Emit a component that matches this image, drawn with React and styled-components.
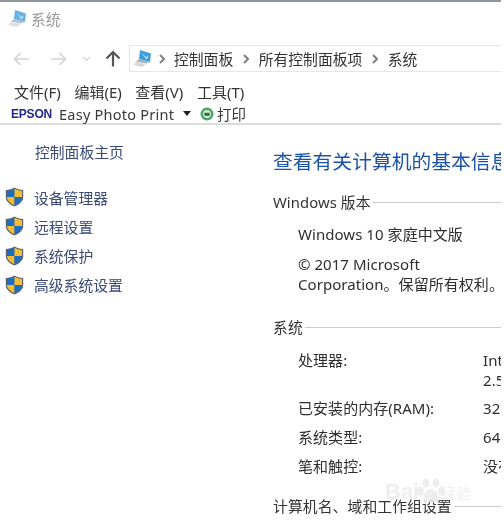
import React from 'react';
import styled, { createGlobalStyle } from 'styled-components';

const GlobalStyle = createGlobalStyle`
    html, body {
        margin: 0;
        padding: 0;
        background: #fff;
    }
    body {
        font-family: "Noto Sans", "Noto Sans CJK SC", "Open Sans", sans-serif;
        color: #2b2b2b;
    }
`;

const Page = styled.div`
    position: relative;
    width: 504px;
    height: 523px;
    overflow: hidden;
    background: #fff;
    filter: blur(0.3px);
`;

const Window = styled.div`
    width: 501px;
    height: 523px;
    overflow: hidden;
    border-top: 2px solid #8f979c;
    box-sizing: border-box;
`;

const TitleBar = styled.div`
    display: flex;
    align-items: center;
    gap: 3px;
    height: 35px;
    padding: 0 0 2px 8px;
    box-sizing: border-box;
    font-size: 14.7px;
    color: #9a9a9a;
`;

const NavBar = styled.div`
    display: flex;
    align-items: center;
    height: 27px;
    margin-top: 8px;
    padding-left: 13px;
`;

const NavButton = styled.span`
    display: flex;
    align-items: center;
    width: ${({ $w }) => $w}px;
    color: ${({ $color }) => $color};
`;

const AddressBar = styled.div`
    display: flex;
    align-items: center;
    flex: 1;
    height: 25px;
    margin-left: 8px;
    padding-left: 3px;
    border: 1px solid #e6e6e6;
    border-right: none;
    font-size: 14.8px;
    color: #333;
    white-space: nowrap;
`;

const Chevron = styled.span`
    display: flex;
    margin: 0 ${({ $first }) => ($first ? 9 : 9.5)}px 0 ${({ $first }) => ($first ? 6 : 10)}px;
    color: #808080;
`;

const MenuBar = styled.div`
    display: flex;
    gap: 13.6px;
    height: 27px;
    margin-top: 5px;
    padding: 3px 0 0 14px;
    box-sizing: border-box;
    font-size: 15px;
    line-height: 24px;
    color: #333;
`;

const PrintBar = styled.div`
    display: flex;
    align-items: center;
    height: 19px;
    padding-left: 11px;
    border-bottom: 2px solid #dcdcdc;
    font-size: 14.5px;
    color: #3a3a3a;
`;

const EpsonLogo = styled.span`
    width: 48px;
    font-family: "Liberation Sans", sans-serif;
    font-size: 12px;
    font-weight: 700;
    letter-spacing: -0.2px;
    color: #1d2a8c;
`;

const PhotoPrint = styled.span`
    width: 124px;
    font-size: 14.5px;
    letter-spacing: 0.25px;
`;

const Caret = styled.span`
    width: 0;
    height: 0;
    margin-right: 9px;
    border-left: 4.5px solid transparent;
    border-right: 4.5px solid transparent;
    border-top: 5px solid #222;
`;

const PrintLabel = styled.span`
    margin-left: 3px;
`;

const Body = styled.div`
    display: flex;
`;

const Sidebar = styled.div`
    flex: 0 0 273px;
    padding: 16px 0 0 5px;
    box-sizing: border-box;
    font-size: 14.8px;
    color: #3b4a78;
`;

const HomeLink = styled.div`
    height: 22px;
    margin: 0 0 23px 30px;
    line-height: 22px;
`;

const TaskList = styled.div`
    display: flex;
    flex-direction: column;
    gap: 7.3px;
`;

const TaskRow = styled.div`
    display: flex;
    align-items: center;
    gap: 10px;
    height: 22px;
`;

const Content = styled.div`
    flex: 1;
    min-width: 0;
    overflow: hidden;
    padding-top: 23px;
    white-space: nowrap;
`;

const Heading = styled.h1`
    margin: 0 0 16px;
    height: 27px;
    overflow: hidden;
    font-size: 19.8px;
    font-weight: 400;
    line-height: 27px;
    color: #1c52a6;
`;

const Section = styled.div`
    display: flex;
    align-items: center;
    gap: 2px;
    height: 20px;
    margin-top: ${({ $gap }) => $gap || 0}px;
    font-size: 14.8px;
    letter-spacing: 0.1px;
    color: #333;
`;

const SectionRule = styled.span`
    flex: 1;
    height: 1.5px;
    margin-top: 3px;
    background: #cbcbcb;
`;

const Block = styled.div`
    padding-left: 25px;
    font-size: 15px;
    letter-spacing: 0.05px;
    line-height: 20px;
    color: #2e2e2e;
`;

const InfoLine = styled.div`
    margin-top: ${({ $gap }) => $gap || 0}px;
`;

const SpecRow = styled.div`
    display: grid;
    grid-template-columns: 185px 1fr;
    margin-top: ${({ $gap }) => $gap || 9}px;
    overflow: hidden;
    line-height: 20px;
`;

const Watermark = styled.div`
    position: absolute;
    left: 385px;
    top: 478px;
    display: flex;
    align-items: flex-end;
    color: #ececec;
    opacity: 0.85;
`;

const WatermarkBrand = styled.span`
    width: 32px;
    font-family: "Liberation Sans", sans-serif;
    font-size: 22px;
    font-weight: 700;
    line-height: 26px;
`;

const WatermarkText = styled.span`
    margin: 0 0 2px -4px;
    font-size: 15px;
    line-height: 20px;
`;

const Shield = () => (
    <svg width="19" height="20" viewBox="0 0 19 20">
        <path d="M9.5 0.6 C7 2 4 2.9 0.8 3 V10 C0.8 14.5 5 17.8 9.5 19.4 C14 17.8 18.2 14.5 18.2 10 V3 C15 2.9 12 2 9.5 0.6 Z" fill="#5c6470" />
        <path d="M9.5 1.8 C7.2 3 4.6 3.8 2 3.9 V10 H9.5 Z" fill="#1a6fc4" />
        <path d="M9.5 1.8 C11.8 3 14.4 3.8 17 3.9 V10 H9.5 Z" fill="#f7bd32" />
        <path d="M2 10 H9.5 V18.1 C5.6 16.6 2.2 13.8 2 10 Z" fill="#f7bd32" />
        <path d="M17 10 H9.5 V18.1 C13.4 16.6 16.8 13.8 17 10 Z" fill="#1a6fc4" />
    </svg>
);

const ComputerIcon = ({ pale }) => (
    <svg width="20" height="19" viewBox="0 0 20 19" opacity={pale ? 0.8 : 1}>
        <path d="M7 1 L18 4.5 L17 13 L6 10 Z" fill="#3f9fdc" />
        <path d="M8.5 4 L13 8 L16 6.5 L13.5 10.5 Z" fill="#bfe4f7" />
        <path d="M6 10 L17 13 L13 14.5 L3 12.5 Z" fill="#9fb4c0" />
        <path d="M3 13 L13 15 L9 18 L0.5 16 Z" fill="#d6d8da" />
    </svg>
);

const ArrowLeft = () => (
    <svg width="16" height="14" viewBox="0 0 16 14" fill="none" stroke="currentColor" strokeWidth="1.6">
        <path d="M16 7 H1.5 M7.5 1 L1.5 7 L7.5 13" />
    </svg>
);

const ArrowRight = () => (
    <svg width="16" height="14" viewBox="0 0 16 14" fill="none" stroke="currentColor" strokeWidth="1.6">
        <path d="M0 7 H14.5 M8.5 1 L14.5 7 L8.5 13" />
    </svg>
);

const ArrowUp = () => (
    <svg width="16" height="17" viewBox="0 0 16 17" fill="none" stroke="currentColor" strokeWidth="2.2">
        <path d="M8 16.5 V2 M1.5 8.5 L8 2 L14.5 8.5" />
    </svg>
);

const SmallChevron = () => (
    <svg width="6" height="10" viewBox="0 0 6 10" fill="none" stroke="currentColor" strokeWidth="2">
        <path d="M1 1 L5 5 L1 9" />
    </svg>
);

const DownChevron = () => (
    <svg width="9" height="6" viewBox="0 0 9 6" fill="none" stroke="currentColor" strokeWidth="1.2">
        <path d="M1 1 L4.5 4.5 L8 1" />
    </svg>
);

const PrintIcon = () => (
    <svg width="14" height="14" viewBox="0 0 14 14">
        <circle cx="7" cy="7" r="6.5" fill="#4aa564" />
        <circle cx="7" cy="7" r="4" fill="#cfe9d3" />
        <rect x="4.4" y="5.8" width="5.2" height="3" fill="#2c6b3f" />
    </svg>
);

const PawIcon = () => (
    <svg width="28" height="27" viewBox="0 0 28 27" fill="currentColor">
        <ellipse cx="9" cy="5" rx="3.5" ry="4.5" />
        <ellipse cx="19" cy="5" rx="3.5" ry="4.5" />
        <ellipse cx="3.5" cy="13" rx="3.5" ry="4.5" />
        <ellipse cx="24.5" cy="13" rx="3.5" ry="4.5" />
        <path d="M14 11 C9 11 6 17 6 21 C6 26 11 25 14 24 C17 25 22 26 22 21 C22 17 19 11 14 11 Z" />
    </svg>
);

const crumbs = ['所有控制面板项', '系统'];
const tasks = ['设备管理器', '远程设置', '系统保护', '高级系统设置'];

export default function App() {
    return (
        <Page>
            <GlobalStyle />
            <Window>
                <TitleBar>
                    <ComputerIcon pale />
                    系统
                </TitleBar>
                <NavBar>
                    <NavButton $w={38} $color="#d4d4d4"><ArrowLeft /></NavButton>
                    <NavButton $w={31} $color="#d4d4d4"><ArrowRight /></NavButton>
                    <NavButton $w={23} $color="#d4d4d4"><DownChevron /></NavButton>
                    <NavButton $w={16} $color="#555"><ArrowUp /></NavButton>
                    <AddressBar>
                        <ComputerIcon />
                        <Chevron $first><SmallChevron /></Chevron>
                        <span>控制面板</span>
                        {crumbs.map((crumb) => (
                            <React.Fragment key={crumb}>
                                <Chevron><SmallChevron /></Chevron>
                                <span>{crumb}</span>
                            </React.Fragment>
                        ))}
                    </AddressBar>
                </NavBar>
                <MenuBar>
                    <span>文件(F)</span>
                    <span>编辑(E)</span>
                    <span>查看(V)</span>
                    <span>工具(T)</span>
                </MenuBar>
                <PrintBar>
                    <EpsonLogo>EPSON</EpsonLogo>
                    <PhotoPrint>Easy Photo Print</PhotoPrint>
                    <Caret />
                    <PrintIcon />
                    <PrintLabel>打印</PrintLabel>
                </PrintBar>
                <Body>
                    <Sidebar>
                        <HomeLink>控制面板主页</HomeLink>
                        <TaskList>
                            {tasks.map((task) => (
                                <TaskRow key={task}>
                                    <Shield />
                                    {task}
                                </TaskRow>
                            ))}
                        </TaskList>
                    </Sidebar>
                    <Content>
                        <Heading>查看有关计算机的基本信息</Heading>
                        <Section>Windows 版本<SectionRule /></Section>
                        <Block>
                            <InfoLine $gap={13}>Windows 10 家庭中文版</InfoLine>
                            <InfoLine $gap={10}>© 2017 Microsoft</InfoLine>
                            <InfoLine>Corporation。保留所有权利。</InfoLine>
                        </Block>
                        <Section $gap={22}>系统<SectionRule /></Section>
                        <Block>
                            <SpecRow $gap={14}>
                                <span>处理器:</span>
                                <span>Intel(R) Core(TM)<br />2.50GHz</span>
                            </SpecRow>
                            <SpecRow $gap={8}>
                                <span>已安装的内存(RAM):</span>
                                <span>32.0 GB</span>
                            </SpecRow>
                            <SpecRow>
                                <span>系统类型:</span>
                                <span>64 位操作系统</span>
                            </SpecRow>
                            <SpecRow>
                                <span>笔和触控:</span>
                                <span>没有可用于此显示器的笔或触控输入</span>
                            </SpecRow>
                        </Block>
                        <Section $gap={19}>计算机名、域和工作组设置<SectionRule /></Section>
                    </Content>
                </Body>
            </Window>
            <Watermark>
                <WatermarkBrand>Bai</WatermarkBrand>
                <PawIcon />
                <WatermarkText>经验</WatermarkText>
            </Watermark>
        </Page>
    );
}
